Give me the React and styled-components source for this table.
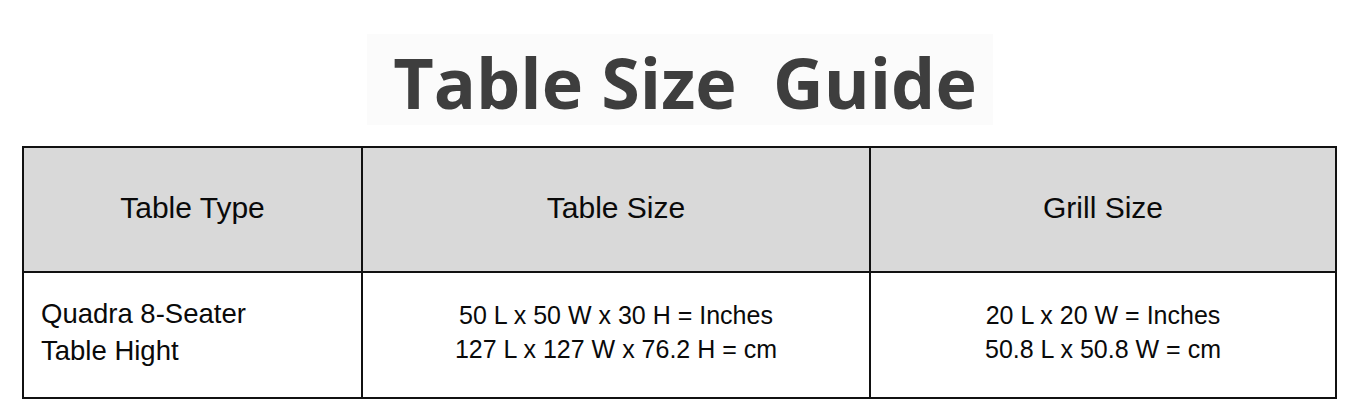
import React from "react";
import styled, { createGlobalStyle } from "styled-components";

const GlobalStyle = createGlobalStyle`
  html, body {
    margin: 0;
    padding: 0;
    background: #ffffff;
  }
  body {
    font-family: "Liberation Sans", Arial, sans-serif;
    color: #000;
  }
`;

const Page = styled.div`
  width: 1356px;
  display: flex;
  flex-direction: column;
  align-items: center;
  padding-top: 34px;
`;

const TitleBox = styled.div`
  width: 626px;
  height: 91px;
  box-sizing: border-box;
  padding-left: 10px;
  margin-left: 4px;
  background: #fbfbfb;
  display: flex;
  align-items: center;
  justify-content: center;
`;

const Title = styled.h1`
  margin: 0;
  font-family: "Open Sans", "DejaVu Sans", sans-serif;
  font-weight: 700;
  font-size: 70px;
  line-height: 1;
  color: #3e3e3e;
  white-space: pre;
  padding-top: 4px;
`;

const Grid = styled.div`
  margin-top: 21px;
  margin-left: 3px;
  width: 1315px;
  box-sizing: border-box;
  display: grid;
  grid-template-columns: 339px 508px 466px;
  grid-template-rows: 125px 126px;
  border-top: 2px solid #111;
  border-left: 2px solid #111;
`;

const Cell = styled.div`
  box-sizing: border-box;
  border-right: 2px solid #111;
  border-bottom: 2px solid #111;
  background: ${(p) => (p.$head ? "#d9d9d9" : "#ffffff")};
  display: flex;
  align-items: center;
  justify-content: ${(p) => (p.$left ? "flex-start" : "center")};
  padding: ${(p) => (p.$head ? "0 0 3px 0" : p.$left ? "0 0 6px 17px" : "0 0 7px 0")};
`;

const Text = styled.span`
  display: inline-block;
  font-size: ${(p) => p.$size}px;
  line-height: ${(p) => p.$lh}px;
  text-align: ${(p) => (p.$left ? "left" : "center")};
  white-space: nowrap;
  color: #0a0a0a;
`;

const headers = ["Table Type", "Table Size", "Grill Size"];

export default function App() {
  return (
    <>
      <GlobalStyle />
      <Page>
        <TitleBox>
          <Title>{"Table Size  Guide"}</Title>
        </TitleBox>
        <Grid>
          {headers.map((h) => (
            <Cell $head key={h}>
              <Text $size={30} $lh={34}>{h}</Text>
            </Cell>
          ))}
          <Cell $left>
            <Text $left $size={27.5} $lh={37}>
              Quadra 8-Seater
              <br />
              Table Hight
            </Text>
          </Cell>
          <Cell>
            <Text $size={25} $lh={34}>
              50 L x 50 W x 30 H = Inches
              <br />
              127 L x 127 W x 76.2 H = cm
            </Text>
          </Cell>
          <Cell>
            <Text $size={25} $lh={34}>
              20 L x 20 W = Inches
              <br />
              50.8 L x 50.8 W = cm
            </Text>
          </Cell>
        </Grid>
      </Page>
    </>
  );
}
